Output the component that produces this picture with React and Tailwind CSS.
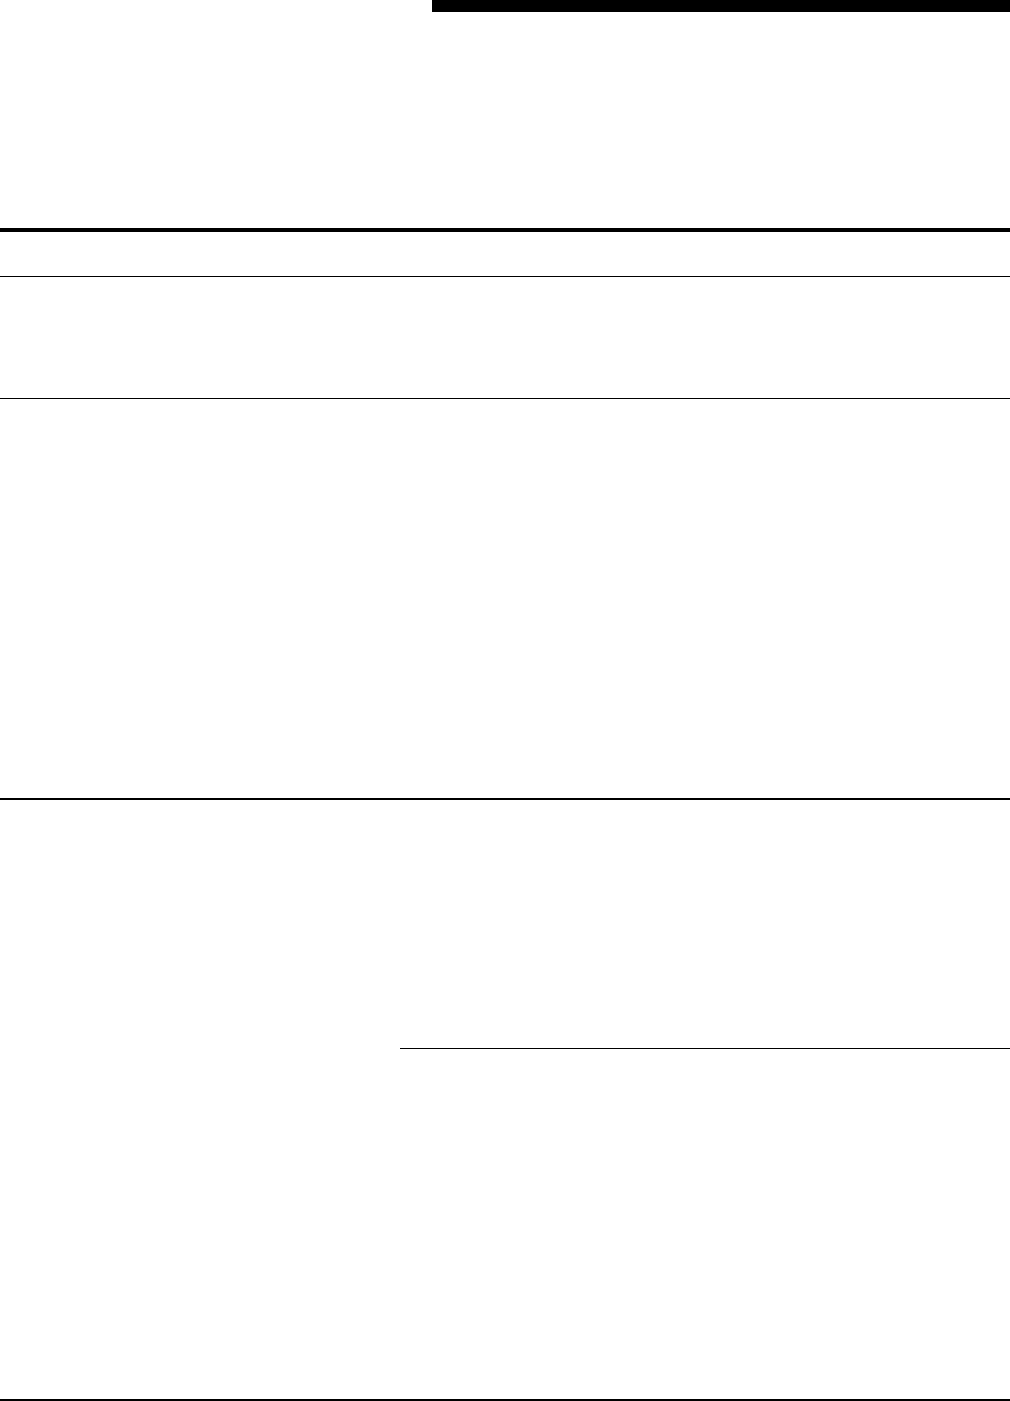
import React from "react";

// blank printed form: header strip + ruled rows
export default function App() {
  return (
    <div className="w-[1010px] h-[1401px] bg-white font-['Liberation_Sans',sans-serif] text-black">
      {/* header */}
      <div className="flex h-[228px]">
        <div className="w-[432px]" />
        <div className="flex-1">
          <div className="h-3 bg-black" />
        </div>
      </div>

      {/* title row */}
      <div className="h-[48px] border-t-4 border-black" />

      {/* section rows */}
      <div className="h-[122px] border-t border-black" />
      <div className="h-[400px] border-t border-black" />

      <div className="flex h-[601px] border-t-2 border-black">
        <div className="w-[400px]" />
        <div className="flex flex-1 flex-col">
          <div className="h-[248px]" />
          <div className="flex-1 border-t border-black" />
        </div>
      </div>

      <div className="h-[2px] bg-black" />
    </div>
  );
}
